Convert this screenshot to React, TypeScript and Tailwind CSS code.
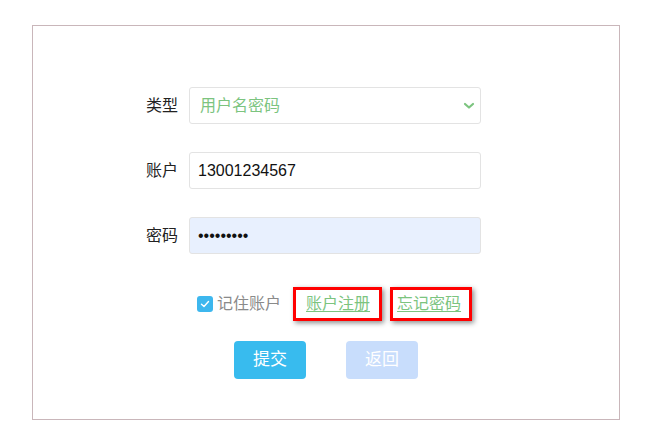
import { useState } from "react";

const font = { fontFamily: '"Liberation Sans", "Noto Sans CJK SC", sans-serif' };

function Row({ label, children }: { label: string; children: React.ReactNode }) {
  return (
    <div className="flex items-center h-[37px]">
      <label className="ml-[100px] w-[45px] text-right text-[16px] text-[#222] mr-[11px]">
        {label}
      </label>
      <div className="relative w-[292px] h-full">{children}</div>
    </div>
  );
}

export default function App() {
  const [remember, setRemember] = useState(true);

  return (
    <div className="w-[652px] h-[433px] bg-white pt-[25px] pl-[32px]" style={font}>
      <div className="w-[588px] h-[395px] border border-[#c9b6ba] pt-[61px]">
        <div className="flex flex-col gap-[28px]">
          <Row label="类型">
            <select
              defaultValue="pwd"
              className="appearance-none w-full h-full rounded-[3px] border border-[#e3e3e3] bg-white pl-[10px] text-[16px] text-[#7cc47f] outline-none"
              style={font}
            >
              <option value="pwd">用户名密码</option>
              <option value="sms">短信验证码</option>
            </select>
            {/* chevron */}
            <svg
              width="12"
              height="8"
              viewBox="0 0 12 8"
              fill="none"
              stroke="#7cc47f"
              strokeWidth="2.2"
              strokeLinecap="round"
              strokeLinejoin="round"
              className="absolute right-[6px] top-[15px] pointer-events-none"
            >
              <polyline points="2 2 6 5.5 10 2" />
            </svg>
          </Row>
          <Row label="账户">
            <input
              type="text"
              defaultValue="13001234567"
              className="w-full h-full rounded-[3px] border border-[#e3e3e3] bg-white pl-[8px] text-[16px] text-[#111] outline-none"
              style={font}
            />
          </Row>
          <Row label="密码">
            <input
              type="password"
              defaultValue="123456789"
              className="w-full h-full rounded-[3px] border border-[#e3e3e3] bg-[#e8f0fe] pl-[8px] text-[16px] text-[#111] outline-none"
              style={font}
            />
          </Row>
        </div>

        {/* remember / links */}
        <div className="flex items-center h-[34px] mt-[33px] ml-[164px]">
          <button
            type="button"
            onClick={() => setRemember(!remember)}
            className="flex items-center gap-[4px] text-[16px] text-[#8a8a8a]"
          >
            <span
              className={`flex items-center justify-center w-[16px] h-[16px] rounded-[3px] ${
                remember ? "bg-[#3db7ee]" : "border border-[#ccc] bg-white"
              }`}
            >
              {remember && (
                <svg width="12" height="12" viewBox="0 0 12 12" fill="none" stroke="white" strokeWidth="1.4" strokeLinecap="round" strokeLinejoin="round">
                  <polyline points="2.5 6.2 5 8.5 9.5 3.5" />
                </svg>
              )}
            </span>
            记住账户
          </button>
          <a
            href="#"
            className="ml-[12px] h-[34px] flex items-center border-[3px] border-[#f00] pl-[10px] pr-[9px] text-[16px] text-[#7cc47f] underline underline-offset-2 shadow-[2px_2px_5px_rgba(0,0,0,0.45)]"
          >
            账户注册
          </a>
          <a
            href="#"
            className="ml-[8px] h-[34px] flex items-center border-[3px] border-[#f00] pl-[4px] pr-[8px] text-[16px] text-[#7cc47f] underline underline-offset-2 shadow-[2px_2px_5px_rgba(0,0,0,0.45)]"
          >
            忘记密码
          </a>
        </div>

        {/* buttons */}
        <div className="flex items-center gap-[40px] mt-[20px] ml-[201px]">
          <button
            type="button"
            className="w-[72px] h-[38px] rounded-[4px] bg-[#38bbee] text-white text-[17px]"
          >
            提交
          </button>
          <button
            type="button"
            className="w-[72px] h-[38px] rounded-[4px] bg-[#c8ddfc] text-white text-[17px]"
          >
            返回
          </button>
        </div>
      </div>
    </div>
  );
}
